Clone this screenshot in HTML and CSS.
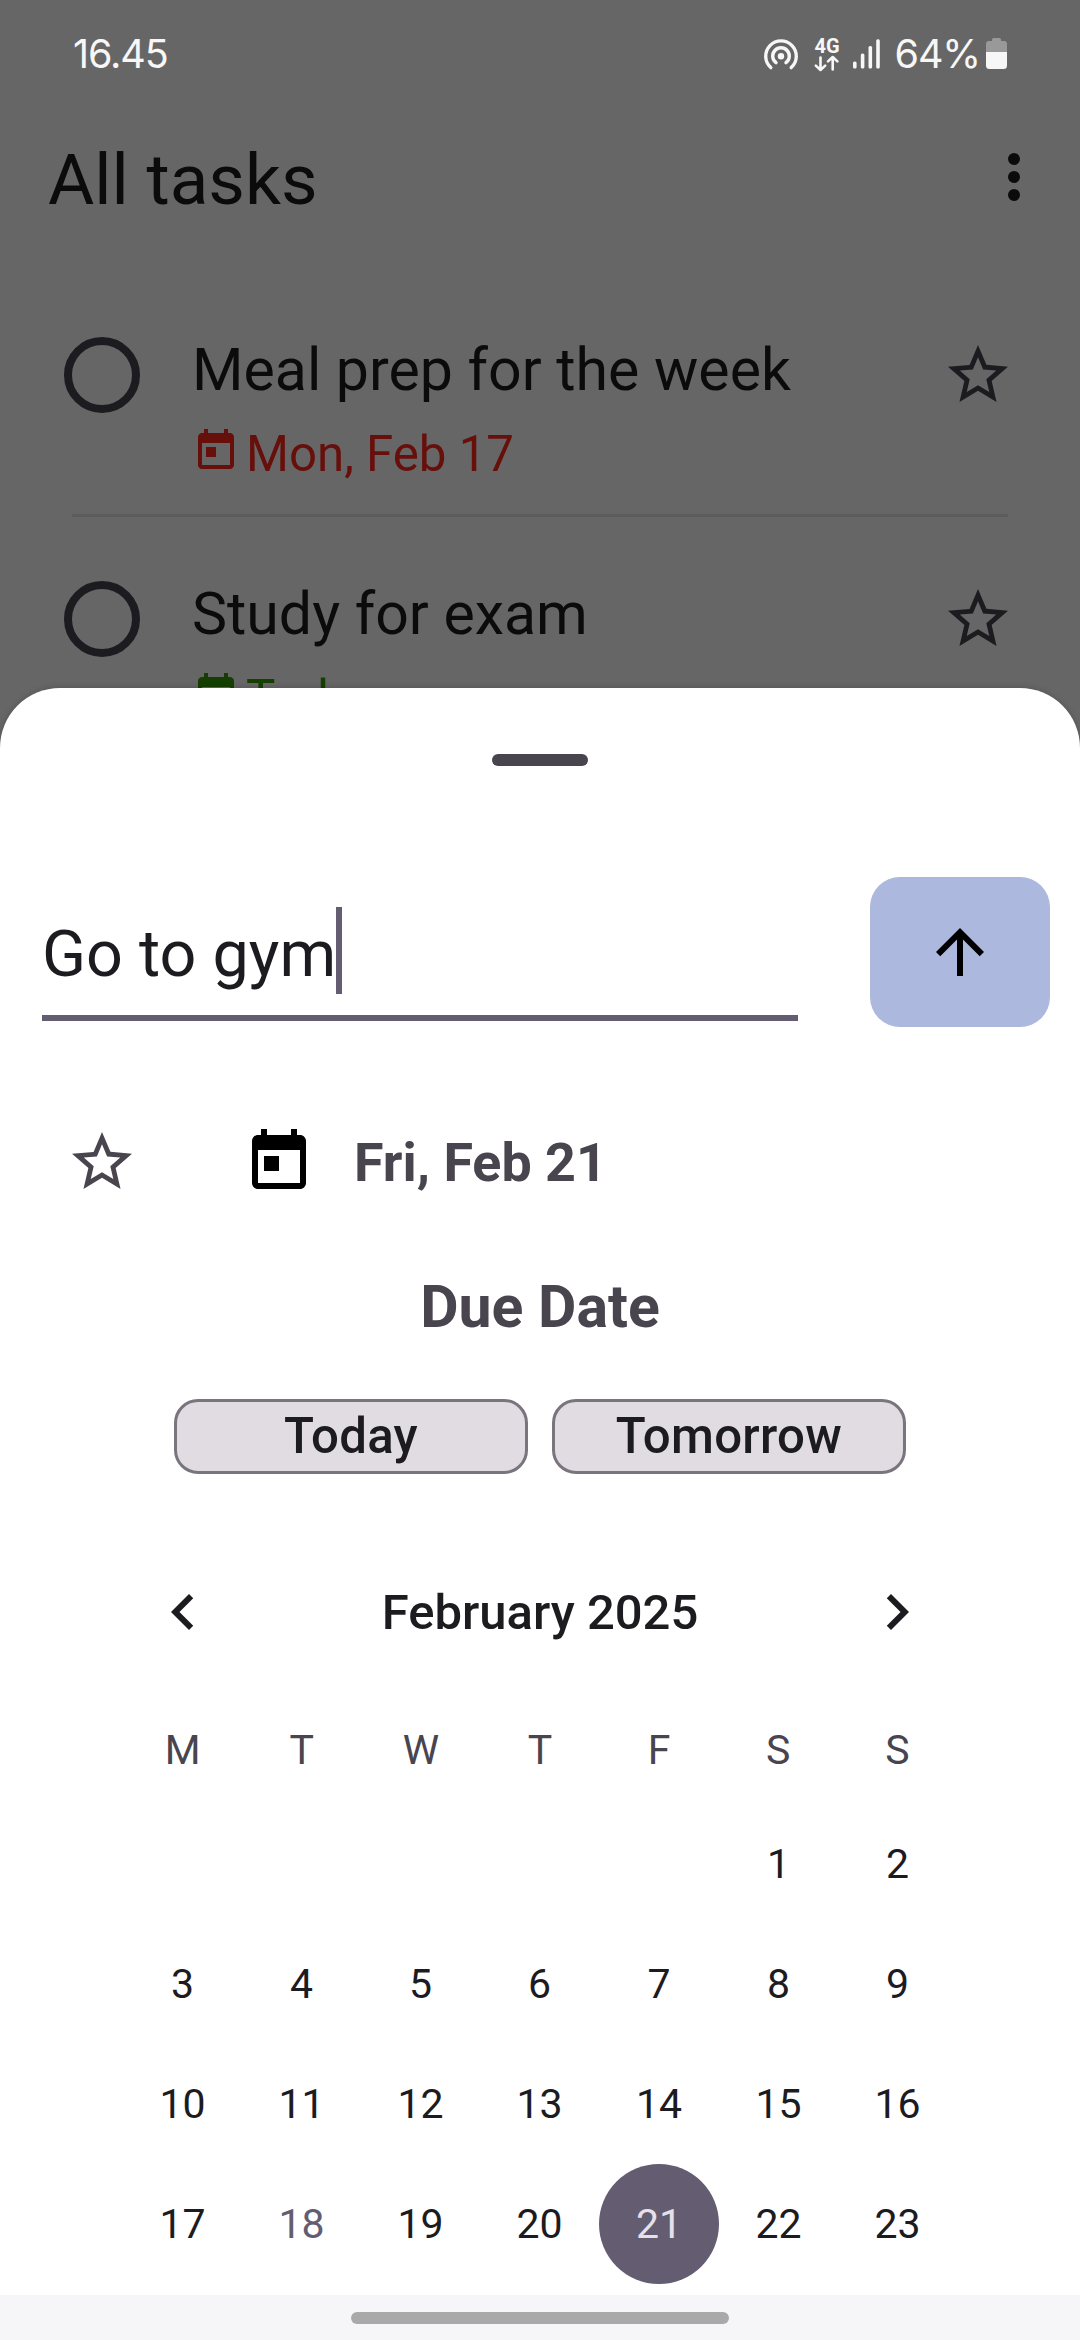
FILE: index.html
```html
<!DOCTYPE html>
<html lang="en">
<head>
<meta charset="utf-8">
<title>All tasks</title>
<link rel="stylesheet" href="styles.css">
</head>
<body>
<svg class="sprite" aria-hidden="true">
  <symbol id="star" viewBox="0 0 24 24"><path d="M22 9.24l-7.19-.62L12 2 9.19 8.63 2 9.24l5.46 4.73L5.82 21 12 17.27 18.18 21l-1.63-7.03L22 9.24zM12 15.4l-3.76 2.27 1-4.28-3.32-2.88 4.38-.38L12 6.1l1.71 4.04 4.38.38-3.32 2.88 1 4.28L12 15.4z"/></symbol>
  <symbol id="calendar" viewBox="0 0 24 24"><path d="M19 3h-1V1h-2v2H8V1H6v2H5c-1.11 0-1.99.9-1.99 2L3 19c0 1.1.89 2 2 2h14c1.1 0 2-.9 2-2V5c0-1.1-.9-2-2-2zm0 16H5V8h14v11zM7 10h5v5H7z"/></symbol>
</svg>
<div class="screen">
  <header class="status">
    <span class="clock">16.45</span>
    <div class="indicators">
      <svg class="hotspot" viewBox="0 0 36 36"><g fill="none" stroke="currentColor" stroke-width="3.4" stroke-linecap="round"><path d="M7.8 29.6A15.3 15.3 0 1 1 28.2 29.6"/><path d="M13 24.7A8.3 8.3 0 1 1 23 24.7"/></g><circle cx="18" cy="18.3" r="3.2" fill="currentColor"/></svg>
      <svg class="network" viewBox="0 0 26 36"><text x="0.5" y="16" class="network-label">4G</text><path d="M6.5 20.5v12M1.8 28.6l4.7 4.4 4.7-4.4M18.7 32.5v-12M14 24.4l4.7-4.4 4.7 4.4" fill="none" stroke="currentColor" stroke-width="2.6" stroke-linecap="round" stroke-linejoin="round"/></svg>
      <svg class="signal" viewBox="0 0 28 30"><g fill="currentColor"><rect x="0" y="22.5" width="3.6" height="7" rx="1.5"/><rect x="7.8" y="14.5" width="3.6" height="15" rx="1.5"/><rect x="15.5" y="7" width="3.6" height="22.5" rx="1.5"/><rect x="23.2" y="0.3" width="3.6" height="29.2" rx="1.5"/></g></svg>
      <span class="percent">64%</span>
      <svg class="battery" viewBox="0 0 21 31"><path d="M6 3V1.500Q6 0 7.500 0h6Q15 0 15 1.500V3h3q3 0 3 3v8H0V6q0-3 3-3z" fill="#999"/><path d="M0 14h21v13.500q0 3.500-3.500 3.500h-14Q0 31 0 27.500z" fill="#f7f7f7"/></svg>
    </div>
  </header>
  <div class="titlebar">
    <h1>All tasks</h1>
    <svg class="more" viewBox="0 0 12 48"><circle cx="6" cy="6" r="6"/><circle cx="6" cy="24" r="6"/><circle cx="6" cy="42" r="6"/></svg>
  </div>
  <ul class="tasks">
    <li class="task">
      <div class="task-row">
        <span class="check"></span>
        <div class="task-body">
          <div class="task-name">Meal prep for the week</div>
          <div class="task-date overdue"><svg><use href="#calendar"/></svg><span>Mon, Feb 17</span></div>
        </div>
        <svg class="task-star"><use href="#star"/></svg>
      </div>
    </li>
    <li class="task">
      <div class="task-row">
        <span class="check"></span>
        <div class="task-body">
          <div class="task-name">Study for exam</div>
          <div class="task-date due"><svg><use href="#calendar"/></svg><span>Today</span></div>
        </div>
        <svg class="task-star"><use href="#star"/></svg>
      </div>
    </li>
  </ul>

  <section class="sheet">
    <div class="handle"></div>
    <div class="entry">
      <div class="field"><span>Go to gym</span><i class="caret"></i></div>
      <button class="send"><svg viewBox="0 0 24 24"><path d="M4 12l1.410 1.410L11 7.830V20h2V7.830l5.580 5.590L20 12l-8-8-8 8z"/></svg></button>
    </div>
    <div class="options">
      <svg class="option-star"><use href="#star"/></svg>
      <svg class="option-date"><use href="#calendar"/></svg>
      <span class="picked">Fri, Feb 21</span>
    </div>
    <h2>Due Date</h2>
    <div class="quick"><button>Today</button><button>Tomorrow</button></div>
    <div class="month">
      <svg viewBox="0 0 24 24"><path d="M15.410 7.410L14 6l-6 6 6 6 1.410-1.410L10.830 12z"/></svg>
      <span>February 2025</span>
      <svg viewBox="0 0 24 24"><path d="M10 6L8.590 7.410 13.170 12l-4.580 4.590L10 18l6-6z"/></svg>
    </div>
    <div class="weekdays"><span>M</span><span>T</span><span>W</span><span>T</span><span>F</span><span>S</span><span>S</span></div>
    <div class="days">
      <span class="first">1</span><span>2</span>
      <span>3</span><span>4</span><span>5</span><span>6</span><span>7</span><span>8</span><span>9</span>
      <span>10</span><span>11</span><span>12</span><span>13</span><span>14</span><span>15</span><span>16</span>
      <span>17</span><span class="today">18</span><span>19</span><span>20</span><span class="selected">21</span><span>22</span><span>23</span>
    </div>
    <div class="navbar"><div class="pill"></div></div>
  </section>
</div>
</body>
</html>
```
FILE: styles.css
```css
* { box-sizing: border-box; }
body { margin: 0; font-family: Roboto, "Liberation Sans", sans-serif; color: #1c1b1f; }
svg { display: block; flex: none; fill: currentColor; }
button { margin: 0; padding: 0; border: 0; font: inherit; color: inherit; }
.sprite { display: none; }

.screen { position: relative; width: 1080px; height: 2340px; overflow: hidden; background: #666; }

.status { display: flex; justify-content: space-between; align-items: center; height: 107px; padding: 0 73px 0 73px; font: 400 39.5px/48px Inter, Roboto, sans-serif; letter-spacing: -1.1px; color: #f7f7f7; }
.indicators { display: flex; align-items: center; }
.hotspot { width: 36px; height: 36px; margin-right: 15px; position: relative; top: 2px; }
.network { width: 26px; height: 36px; margin-right: 13px; overflow: visible; position: relative; top: 1px; }
.network-label { font: 700 20px Roboto, sans-serif; letter-spacing: 0; }
.signal { width: 28px; height: 30px; margin-right: 14px; }
.percent { margin-right: 6px; }
.battery { width: 21px; height: 31px; }

.titlebar { display: flex; justify-content: space-between; align-items: center; height: 145px; margin-bottom: 21px; padding: 0 60px 0 48px; color: #0b0b0b; }
h1 { margin: 0; font-size: 71px; line-height: 84px; font-weight: 400; }
.more { width: 12px; height: 48px; margin-bottom: 5px; }

.tasks { margin: 0; padding: 0; list-style: none; }
.task { height: 244px; }
.task::after { content: ""; display: block; height: 3px; margin: 0 72px; background: #5c5c5c; }
.task-row { display: flex; align-items: flex-start; height: 241px; padding: 62px 66px 0 64px; }
.check { flex: none; width: 76px; height: 76px; margin: 2px 52px 0 0; border: 8px solid #1c1c20; border-radius: 50%; }
.task-body { flex: 1; }
.task-name { font-size: 59px; line-height: 70px; color: #0b0b0b; }
.task-date { display: flex; align-items: center; gap: 6px; margin-top: 17px; font-size: 49.2px; line-height: 60px; }
.task-date svg { width: 48px; height: 48px; margin-bottom: 5px; }
.task-date span { padding-top: 2px; }
.overdue { color: #670f0b; }
.due { color: #153f00; }
.task-star { width: 72px; height: 72px; margin-top: 4px; color: #1c1c20; }

.sheet { position: absolute; inset: 688px 0 0; display: flex; flex-direction: column; background: #fff; border-radius: 60px 60px 0 0; box-shadow: 0 0 6px rgba(0, 0, 0, .2); }
.handle { width: 96px; height: 12px; margin: 66px auto 111px; border-radius: 6px; background: #49454f; }
.entry { display: flex; gap: 72px; padding: 0 30px 0 42px; }
.field { display: flex; align-items: center; flex: 1; height: 114px; margin-top: 30px; padding-bottom: 14px; border-bottom: 6px solid #645c71; font-size: 64.7px; line-height: 76px; }
.caret { align-self: flex-start; width: 6px; height: 87px; background: #645c71; }
.send { display: grid; place-items: center; width: 180px; height: 150px; border-radius: 30px; background: #adb8df; color: #000; }
.send svg { width: 72px; height: 72px; }
.options { display: flex; align-items: center; height: 72px; margin-top: 99px; padding-left: 66px; color: #49454f; }
.options svg { width: 72px; height: 72px; }
.option-star { margin-right: 105px; }
.option-date { margin-right: 39px; color: #000; }
.picked { font-size: 53.8px; font-weight: 700; }
h2 { margin: 74px 0 57px; text-align: center; font-size: 59px; line-height: 70px; font-weight: 700; color: #49454f; }
.quick { display: grid; grid-template-columns: 1fr 1fr; gap: 24px; padding: 0 174px; }
.quick button { height: 75px; padding-bottom: 1px; border: 3px solid #79747e; border-radius: 24px; background: #e1dce1; font-size: 49.2px; line-height: 60px; font-weight: 500; letter-spacing: .3px; }
.month { display: flex; align-items: center; justify-content: space-between; height: 72px; margin: 102px 147px 48px; font-size: 49px; font-weight: 500; }
.month svg { width: 72px; height: 72px; }
.weekdays, .days { display: grid; grid-template-columns: repeat(7, 1fr); margin: 0 123px; text-align: center; font-size: 41px; }
.weekdays { line-height: 108px; color: #49454f; }
.days { grid-auto-rows: 120px; line-height: 120px; }
.first { grid-column-start: 6; }
.today { color: #645c71; }
.selected { justify-self: center; width: 120px; border-radius: 50%; background: #645c71; color: #e6e0e9; }
.navbar { flex: 1; margin-top: 11px; padding-top: 17px; background: #f6f6f8; }
.pill { width: 378px; height: 12px; margin: 0 auto; border-radius: 6px; background: #a9a9a9; }
```
